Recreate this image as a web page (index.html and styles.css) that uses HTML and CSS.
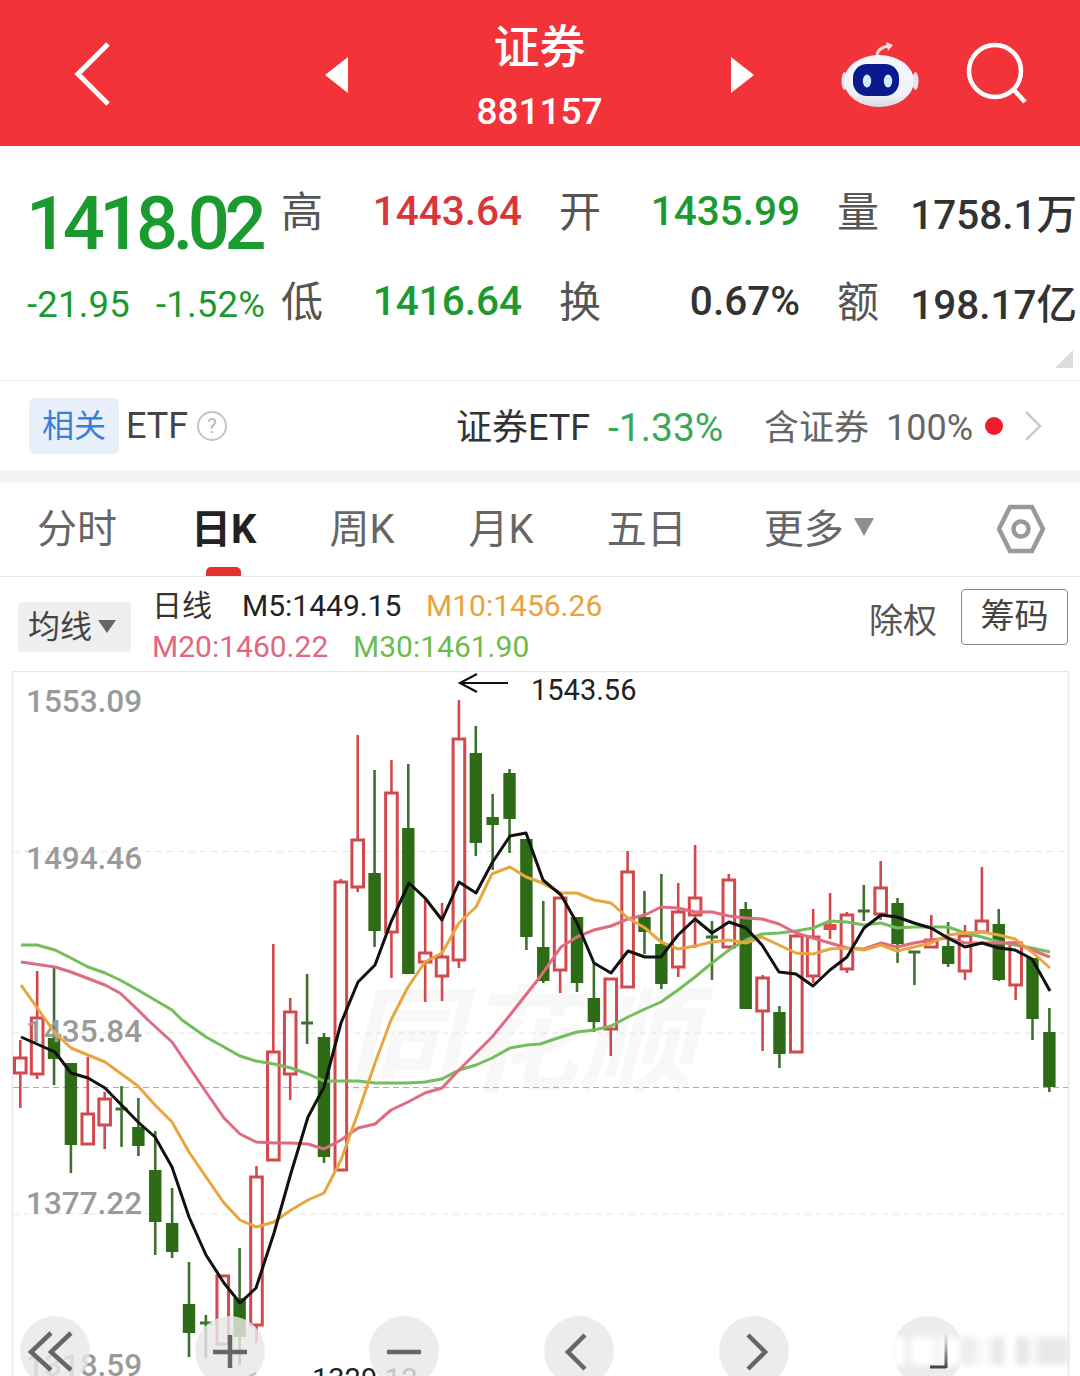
FILE: index.html
```html
<!DOCTYPE html>
<html lang="zh-CN">
<head>
    <meta charset="UTF-8">
    <meta name="viewport" content="width=device-width, initial-scale=1.0">
    <title>证券 881157</title>
    <link rel="stylesheet" href="styles.css">
</head>
<body>
    <header class="topbar">
        <svg class="back-icon" viewBox="0 0 40 64"><path d="M36 2 L6 32 L36 62" /></svg>
        <span class="tri tri-left"></span>
        <div class="title-col">
            <div class="title">证券</div>
            <div class="code">881157</div>
        </div>
        <span class="tri tri-right"></span>
        <svg class="robot-icon" viewBox="0 0 78 68">
            <defs>
                <linearGradient id="robotHead" x1="0" y1="0" x2="0" y2="1">
                    <stop offset="0" stop-color="#f6f7fc" />
                    <stop offset="0.75" stop-color="#f1f2f8" />
                    <stop offset="1" stop-color="#d5d8e2" />
                </linearGradient>
            </defs>
            <path d="M36 14 C36 8 41 5 48 4" fill="none" stroke="#fbdcdc" stroke-width="3" />
            <path d="M45 0 L52 3 L47 9 Z" fill="#fbdcdc" />
            <ellipse cx="3.5" cy="39" rx="3" ry="9" fill="#e2e4ee" />
            <ellipse cx="74.5" cy="39" rx="3" ry="9" fill="#e2e4ee" />
            <ellipse cx="38" cy="39" rx="35" ry="26" fill="url(#robotHead)" />
            <rect x="12" y="22" width="46" height="32" rx="14" fill="#0a1a8e" />
            <ellipse cx="26" cy="39" rx="4.2" ry="6.5" fill="#d2ecff" />
            <ellipse cx="47" cy="39" rx="4.2" ry="6.5" fill="#d2ecff" />
        </svg>
        <svg class="search-icon" viewBox="0 0 64 64">
            <circle cx="29" cy="29" r="26" />
            <path d="M48 48 L59 60" />
        </svg>
    </header>

    <section class="quote">
        <div class="quote-main">
            <div class="price">1418.02</div>
            <div class="change">
                <span>-21.95</span>
                <span>-1.52%</span>
            </div>
        </div>
        <div class="quote-grid">
            <div class="cell"><span class="cell-label">高</span><span class="cell-value up">1443.64</span></div>
            <div class="cell"><span class="cell-label">开</span><span class="cell-value down">1435.99</span></div>
            <div class="cell"><span class="cell-label">量</span><span class="cell-value">1758.1万</span></div>
            <div class="cell"><span class="cell-label">低</span><span class="cell-value down">1416.64</span></div>
            <div class="cell"><span class="cell-label">换</span><span class="cell-value">0.67%</span></div>
            <div class="cell"><span class="cell-label">额</span><span class="cell-value">198.17亿</span></div>
        </div>
        <span class="corner-mark"></span>
    </section>

    <section class="etf-row">
        <span class="etf-chip">相关</span>
        <span class="etf-label">ETF</span>
        <span class="help-icon">?</span>
        <span class="etf-name">证券ETF</span>
        <span class="etf-change">-1.33%</span>
        <span class="etf-holds">含证券</span>
        <span class="etf-percent">100%</span>
        <span class="red-dot"></span>
        <svg class="etf-arrow" viewBox="0 0 18 32"><path d="M2 2 L16 16 L2 30" /></svg>
    </section>

    <nav class="tabs">
        <span class="tab tab-1">分时</span>
        <span class="tab tab-2 active">日K</span>
        <span class="tab tab-3">周K</span>
        <span class="tab tab-4">月K</span>
        <span class="tab tab-5">五日</span>
        <span class="tab tab-6">更多<i class="tab-caret"></i></span>
        <svg class="settings-icon" viewBox="0 0 48 50">
            <path d="M13 3 L35 3 L46 25 L35 47 L13 47 L2 25 Z" />
            <circle cx="24" cy="25" r="7.5" />
        </svg>
    </nav>

    <section class="legend">
        <span class="ma-select">均线<i class="ma-caret"></i></span>
        <div class="ma-values">
            <div class="ma-line">
                <span class="ma-name">日线</span>
                <span class="ma5">M5:1449.15</span>
                <span class="ma10">M10:1456.26</span>
            </div>
            <div class="ma-line">
                <span class="ma20">M20:1460.22</span>
                <span class="ma30">M30:1461.90</span>
            </div>
        </div>
        <span class="fq">除权</span>
        <span class="chip-btn">筹码</span>
    </section>

    <section class="chart">
        <svg id="klineChart" class="kline" viewBox="0 671 1080 705"></svg>
        <div class="tools">
            <span class="tool"><svg viewBox="0 0 70 70"><path d="M31 17 L11 36 L31 54 M51 17 L31 36 L51 54" /></svg></span>
            <span class="tool"><svg viewBox="0 0 70 70"><path d="M18 36 L52 36 M35 19 L35 52" /></svg></span>
            <span class="tool"><svg viewBox="0 0 70 70"><path d="M18 36 L52 36" /></svg></span>
            <span class="tool"><svg viewBox="0 0 70 70"><path d="M41 19 L24 36 L41 53" /></svg></span>
            <span class="tool"><svg viewBox="0 0 70 70"><path d="M29 19 L46 36 L29 53" /></svg></span>
            <span class="tool"></span>
        </div>
        <div class="blur-strip"></div>
        <svg class="corner-icon" viewBox="0 0 18 34">
            <defs>
                <linearGradient id="cornerFade" x1="0" y1="0" x2="0" y2="1">
                    <stop offset="0" stop-color="#555" stop-opacity="0.1" />
                    <stop offset="1" stop-color="#444" />
                </linearGradient>
            </defs>
            <path d="M0 32 L16 32" />
            <rect x="14.5" y="0" width="3" height="33" fill="url(#cornerFade)" stroke="none" />
        </svg>
    </section>

    <script src="chart.js"></script>
</body>
</html>
```

FILE: styles.css
```css
* {
    box-sizing: border-box;
}
html, body {
    margin: 0;
    padding: 0;
}
body {
    width: 1080px;
    height: 1376px;
    overflow: hidden;
    background-color: #fff;
    font-family: Roboto, "Noto Sans CJK SC", sans-serif;
    color: #333;
}

/* top red bar */
.topbar {
    display: flex;
    align-items: center;
    height: 146px;
    background-color: #f23339;
    color: #fff;
}
.back-icon {
    width: 40px;
    height: 64px;
    margin-left: 72px;
    margin-top: 2px;
    fill: none;
    stroke: #fff;
    stroke-width: 5;
}
.tri {
    width: 0;
    height: 0;
    margin-top: 4px;
    border-top: 18px solid transparent;
    border-bottom: 18px solid transparent;
}
.tri-left {
    margin-left: 213px;
    border-right: 23px solid #fff;
}
.tri-right {
    border-left: 23px solid #fff;
}
.title-col {
    width: 383px;
    text-align: center;
}
.title {
    font-size: 46px;
    font-weight: 500;
    line-height: 60px;
    margin-top: 8px;
}
.code {
    font-size: 37px;
    font-weight: 500;
    line-height: 50px;
    margin-top: 10px;
}
.robot-icon {
    width: 78px;
    height: 68px;
    margin-left: 87px;
    margin-top: 6px;
}
.search-icon {
    width: 64px;
    height: 64px;
    margin-left: 47px;
    margin-top: 2px;
    fill: none;
    stroke: #fff;
    stroke-width: 4.5;
}

/* price block */
.quote {
    position: relative;
    display: flex;
    height: 235px;
    border-bottom: 1px solid #efefef;
}
.quote-main {
    width: 281px;
    padding-left: 27px;
    color: #1b9a2f;
}
.price {
    margin-top: 38px;
    margin-left: -1px;
    font-size: 74px;
    font-weight: 500;
    line-height: 80px;
    letter-spacing: -5.4px;
}
.change {
    display: flex;
    gap: 26px;
    margin-top: 19px;
    font-size: 36.5px;
    line-height: 44px;
    letter-spacing: 0.2px;
    white-space: nowrap;
}
.quote-grid {
    display: grid;
    grid-template-columns: 241px 241px 240px;
    grid-auto-rows: 90px;
    column-gap: 37px;
    padding-top: 20px;
}
.cell {
    display: flex;
    justify-content: space-between;
    align-items: center;
    white-space: nowrap;
}
.cell-label {
    margin-top: -5px;
    font-size: 42px;
    color: #555;
}
.cell-value {
    font-size: 40.5px;
    font-weight: 500;
    color: #333;
}
.cell-value.up {
    color: #d9363a;
}
.cell-value.down {
    color: #1b9a2f;
}
.corner-mark {
    position: absolute;
    right: 7px;
    bottom: 12px;
    width: 0;
    height: 0;
    border-left: 18px solid transparent;
    border-bottom: 18px solid #dcdcdc;
}

/* ETF row */
.etf-row {
    display: flex;
    align-items: center;
    height: 89px;
    padding-left: 29px;
    border-bottom: 13px solid #f4f4f4;
    box-sizing: content-box;
    font-size: 36px;
}
.etf-chip {
    width: 90px;
    height: 56px;
    line-height: 56px;
    text-align: center;
    border-radius: 5px;
    background-color: #e9f0fb;
    color: #3a7fd8;
    font-size: 32px;
}
.etf-label {
    margin-left: 7px;
    width: 62px;
    color: #444;
}
.help-icon {
    width: 30px;
    height: 30px;
    margin-left: 9px;
    border: 2px solid #c4c4c4;
    border-radius: 50%;
    line-height: 26px;
    text-align: center;
    font-size: 20px;
    color: #b5b5b5;
}
.etf-name {
    margin-left: 229px;
    margin-top: -3px;
    color: #333;
    width: 132px;
    white-space: nowrap;
}
.etf-change {
    margin-left: 20px;
    margin-top: 4px;
    width: 118px;
    font-size: 39px;
    color: #3aa85a;
}
.etf-holds {
    margin-left: 38px;
    margin-top: -3px;
    width: 104px;
    font-size: 35px;
    color: #666;
    white-space: nowrap;
}
.etf-percent {
    margin-left: 18px;
    margin-top: 4px;
    width: 87px;
    font-size: 36px;
    color: #666;
}
.red-dot {
    width: 18px;
    height: 18px;
    margin-left: 12px;
    border-radius: 50%;
    background-color: #f01c2c;
}
.etf-arrow {
    width: 18px;
    height: 32px;
    margin-left: 21px;
    fill: none;
    stroke: #ccc;
    stroke-width: 2.5;
}

/* period tabs */
.tabs {
    display: flex;
    align-items: center;
    height: 94px;
    padding-bottom: 8px;
    border-bottom: 1px solid #e8e8e8;
    position: relative;
    font-size: 40px;
    color: #666;
}
.tab {
    white-space: nowrap;
}
.tab-1 { margin-left: 37px; }
.tab-2 { margin-left: 74px; }
.tab-3 { margin-left: 73px; }
.tab-4 { margin-left: 74px; }
.tab-5 { margin-left: 73px; }
.tab-6 { margin-left: 77px; }
.tab.active {
    color: #222;
    font-weight: 700;
}
.tab.active::after {
    content: "";
    position: absolute;
    left: 206px;
    bottom: 0;
    width: 35px;
    height: 9px;
    border-radius: 5px 5px 0 0;
    background-color: #e03232;
}
.tab-caret {
    display: inline-block;
    margin-left: 10px;
    vertical-align: 7px;
    border-left: 10px solid transparent;
    border-right: 10px solid transparent;
    border-top: 18px solid #8e8e8e;
}
.settings-icon {
    width: 48px;
    height: 50px;
    margin-left: auto;
    margin-right: 35px;
    margin-top: 6px;
    fill: none;
    stroke: #999;
    stroke-width: 4.5;
}

/* moving average legend */
.legend {
    display: flex;
    align-items: center;
    height: 94px;
    padding-left: 18px;
    font-size: 30px;
}
.ma-select {
    width: 113px;
    height: 50px;
    margin-top: 6px;
    padding-left: 10px;
    line-height: 50px;
    border-radius: 4px;
    background-color: #efefef;
    color: #444;
    font-size: 32px;
    white-space: nowrap;
}
.ma-caret {
    display: inline-block;
    margin-left: 6px;
    vertical-align: 5px;
    border-left: 9px solid transparent;
    border-right: 9px solid transparent;
    border-top: 13px solid #666;
}
.ma-values {
    margin-left: 21px;
    margin-top: 4px;
    width: 682px;
}
.ma-line {
    display: flex;
    line-height: 41px;
    white-space: nowrap;
}
.ma-name {
    width: 90px;
    color: #333;
}
.ma5 {
    width: 184px;
    color: #222;
}
.ma10 {
    color: #e8a33d;
}
.ma20 {
    width: 201px;
    color: #e0677d;
}
.ma30 {
    color: #6cbb4e;
}
.fq {
    margin-left: 35px;
    margin-top: -12px;
    font-size: 34px;
    color: #555;
}
.chip-btn {
    width: 107px;
    height: 56px;
    margin-left: 24px;
    margin-bottom: 14px;
    line-height: 52px;
    text-align: center;
    border: 1.5px solid #888;
    border-radius: 4px;
    font-size: 34px;
    color: #444;
}

/* kline chart */
.chart {
    position: relative;
    height: 705px;
    overflow: hidden;
}
.kline {
    display: block;
    width: 1080px;
    height: 705px;
}
.axis-label {
    font-size: 31.5px;
    font-weight: 500;
    fill: #9a9a9a;
}
.mark-label {
    font-size: 29px;
    fill: #222;
}
.watermark {
    font-size: 116px;
    font-weight: 700;
    font-style: italic;
    fill: #f8f8f8;
}
.tools {
    position: absolute;
    left: 20px;
    top: 645px;
    display: flex;
    gap: 104.7px;
}
.tool {
    width: 70px;
    height: 70px;
    flex: none;
    border-radius: 50%;
    background-color: rgba(232, 232, 232, 0.82);
}
.tool svg {
    display: block;
    width: 70px;
    height: 70px;
    fill: none;
    stroke: #666;
    stroke-width: 4.5;
}
.blur-strip {
    position: absolute;
    left: 892px;
    top: 666px;
    width: 176px;
    height: 28px;
    filter: blur(3px);
    background: linear-gradient(90deg, #fff 0 14px, #e4e4e4 14px 18px, #fff 18px 42px, #f4f4f4 42px 50px, #fff 50px 68px, #ededed 68px 84px, #fafafa 84px 100px, #e8e8e8 100px 112px, #fff 112px 124px, #e6e6e6 124px 136px, #f8f8f8 136px 146px, #e9e9e9 146px 176px);
}
.corner-icon {
    position: absolute;
    left: 930px;
    top: 664px;
    width: 18px;
    height: 34px;
    fill: none;
    stroke: #444;
    stroke-width: 3;
}
```

FILE: chart.js
```js
// [type, high, bodyTop, bodyBottom, low]  r = hollow red, g = solid green, f = filled red, d = green doji
const candles = [
    ['r', 1040, 1057, 1074, 1108], ['r', 971, 1017, 1075, 1079], ['g', 967, 1038, 1059, 1085],
    ['g', 1063, 1063, 1145, 1173], ['r', 1057, 1113, 1145, 1145], ['r', 1092, 1098, 1126, 1149],
    ['d', 1086, 1108, 1110, 1147], ['g', 1098, 1127, 1146, 1156], ['g', 1131, 1170, 1222, 1255],
    ['g', 1188, 1223, 1252, 1258], ['g', 1262, 1304, 1333, 1357], ['d', 1315, 1322, 1324, 1358],
    ['r', 1275, 1275, 1345, 1345], ['g', 1248, 1298, 1337, 1365], ['r', 1166, 1176, 1326, 1343],
    ['r', 944, 1051, 1161, 1161], ['r', 998, 1011, 1075, 1100], ['d', 974, 1022, 1024, 1044],
    ['g', 1033, 1037, 1157, 1163], ['r', 879, 881, 1171, 1171], ['r', 735, 839, 888, 892],
    ['g', 770, 873, 931, 947], ['r', 760, 792, 933, 978], ['g', 764, 828, 974, 974],
    ['r', 900, 952, 963, 1002], ['r', 903, 956, 977, 1001], ['r', 700, 738, 961, 968],
    ['g', 726, 753, 843, 856], ['g', 794, 817, 825, 870], ['g', 769, 773, 819, 853],
    ['g', 839, 839, 937, 950], ['g', 901, 947, 981, 983], ['r', 897, 897, 971, 993],
    ['g', 917, 917, 983, 992], ['g', 963, 998, 1022, 1032], ['r', 978, 978, 1030, 1056],
    ['r', 851, 871, 988, 988], ['g', 891, 917, 932, 954], ['g', 874, 944, 984, 989],
    ['r', 883, 911, 968, 977], ['r', 845, 897, 916, 948], ['d', 921, 936, 938, 980],
    ['r', 874, 879, 948, 948], ['g', 902, 909, 1009, 1009], ['r', 975, 977, 1012, 1051],
    ['g', 1006, 1012, 1054, 1068], ['r', 935, 935, 1053, 1053], ['r', 909, 936, 977, 983],
    ['f', 893, 924, 930, 939], ['r', 912, 914, 970, 973], ['d', 885, 910, 912, 921],
    ['r', 861, 887, 915, 920], ['g', 898, 903, 944, 963], ['d', 951, 951, 953, 985],
    ['r', 915, 939, 948, 948], ['g', 922, 946, 964, 967], ['r', 925, 935, 972, 980],
    ['r', 867, 920, 933, 933], ['g', 909, 924, 980, 981], ['r', 942, 942, 986, 1000],
    ['g', 958, 958, 1019, 1040], ['g', 1008, 1032, 1087, 1092]
];

const ma5 = '21,1037 55,1052 71,1073 88,1078 105,1088 138,1122 155,1137 172,1167 189,1217 206,1255 224,1283 240,1303 256,1288 274,1233 291,1173 308,1117 324,1087 341,1023 358,982 375,965 391,922 409,883 425,898 442,920 459,882 476,893 492,863 510,836 526,833 543,880 561,895 577,923 594,963 611,973 628,951 645,957 661,957 678,935 695,919 712,933 729,922 746,928 762,945 779,972 796,974 813,986 830,970 847,957 864,928 881,915 897,917 914,923 931,928 948,938 965,947 982,943 999,948 1015,950 1032,959 1050,991';
const ma10 = '21,985 55,1033 71,1048 88,1055 105,1062 138,1086 155,1105 172,1122 189,1152 206,1177 224,1203 240,1220 256,1227 274,1222 291,1210 308,1200 324,1193 341,1160 358,1113 375,1063 391,1020 408,987 425,962 442,953 459,923 476,907 492,874 510,867 526,877 540,882 561,893 577,893 594,900 611,903 628,918 645,928 661,942 678,949 695,946 712,942 729,940 746,943 762,937 779,945 796,953 813,954 830,949 847,948 864,950 881,945 897,951 914,947 931,943 948,935 965,933 982,932 999,935 1015,939 1032,952 1050,968';
const ma20 = '21,962 55,967 71,972 105,985 120,993 138,1010 148,1020 172,1042 189,1067 206,1092 224,1118 240,1134 256,1142 274,1143 291,1143 308,1144 324,1149 341,1140 358,1128 375,1124 391,1110 408,1102 425,1093 442,1088 459,1070 476,1053 492,1037 506,1020 540,977 561,947 577,937 594,930 611,926 628,919 645,915 661,907 678,908 695,912 712,912 729,916 746,918 762,919 779,924 796,933 813,938 830,943 847,948 864,949 881,943 897,947 914,943 931,940 948,938 965,943 982,943 999,943 1015,943 1032,950 1050,957';
const ma30 = '21,945 37,945 55,950 71,958 88,967 105,973 120,980 138,990 155,1000 172,1010 182,1020 206,1037 224,1047 240,1056 256,1061 274,1064 291,1068 308,1074 324,1081 341,1081 358,1081 375,1083 408,1083 425,1082 442,1079 459,1070 476,1065 492,1058 510,1048 527,1045 540,1044 561,1037 577,1032 594,1030 611,1026 628,1017 645,1009 661,1002 678,990 695,977 712,963 729,950 746,940 762,934 779,933 796,931 813,928 830,921 847,922 864,925 881,923 897,928 914,927 931,927 948,927 965,933 982,937 999,942 1015,945 1032,948 1050,952';

const RED = '#d1484d';
const GREEN_WICK = '#3f7030';
const GREEN_BODY = '#2e6b16';
const STEP = 16.87;
const FIRST_X = 20.3;

let out = '';

// frame
out += '<path d="M12.5 1376 V671.5 H1068.5 V1376" fill="none" stroke="#e6e6e6" stroke-width="1.5" />';

// watermark
out += '<text class="watermark" x="345" y="1082" textLength="350">同花顺</text>';

// grid lines
[851.5, 1033, 1214].forEach(y => {
    out += `<line x1="13" x2="1068" y1="${y}" y2="${y}" stroke="#e4e4e4" stroke-width="1" stroke-dasharray="6 5" />`;
});
out += '<line x1="13" x2="1068" y1="1087.5" y2="1087.5" stroke="#b8ad98" stroke-width="1.2" stroke-dasharray="6 4" />';

// candles
candles.forEach((c, i) => {
    const x = FIRST_X + STEP * i;
    const type = c[0], high = c[1], top = c[2], bottom = c[3], low = c[4];
    const wick = (type === 'r' || type === 'f') ? RED : GREEN_WICK;
    out += `<line x1="${x}" x2="${x}" y1="${high}" y2="${low}" stroke="${wick}" stroke-width="2.6" />`;
    if (type === 'r') {
        out += `<rect x="${x - 5.8}" y="${top + 1}" width="11.6" height="${bottom - top - 2}" fill="#fff" stroke="${RED}" stroke-width="3" />`;
    } else if (type === 'f') {
        out += `<rect x="${x - 6.5}" y="${top}" width="13" height="${bottom - top}" fill="#e04a4a" />`;
    } else if (type === 'g') {
        out += `<rect x="${x - 6.2}" y="${top}" width="12.4" height="${bottom - top}" fill="${GREEN_BODY}" />`;
    } else {
        out += `<rect x="${x - 6}" y="${top - 0.5}" width="12" height="3" fill="${GREEN_WICK}" />`;
    }
});

// axis labels
[[1553.09, 712], [1494.46, 869], [1435.84, 1042], [1377.22, 1214], [1318.59, 1376]].forEach(item => {
    out += `<text class="axis-label" x="26" y="${item[1]}">${item[0].toFixed(2)}</text>`;
});

// moving averages
[[ma30, '#74bd5c', 3], [ma20, '#e06a80', 3], [ma10, '#e8a540', 3], [ma5, '#111', 3]].forEach(line => {
    out += `<polyline points="${line[0]}" fill="none" stroke="${line[1]}" stroke-width="${line[2]}" stroke-linejoin="round" />`;
});

// high and low marks
out += '<path d="M508 683 H460 M477 674 L460 683 L477 692" fill="none" stroke="#111" stroke-width="2.2" />';
out += '<text class="mark-label" x="531" y="700">1543.56</text>';
out += '<path d="M289 1382 H239 M256 1373 L239 1382 L256 1391" fill="none" stroke="#111" stroke-width="2.2" />';
out += '<text class="mark-label" x="312" y="1389">1329.12</text>';

document.getElementById('klineChart').innerHTML = out;
```
